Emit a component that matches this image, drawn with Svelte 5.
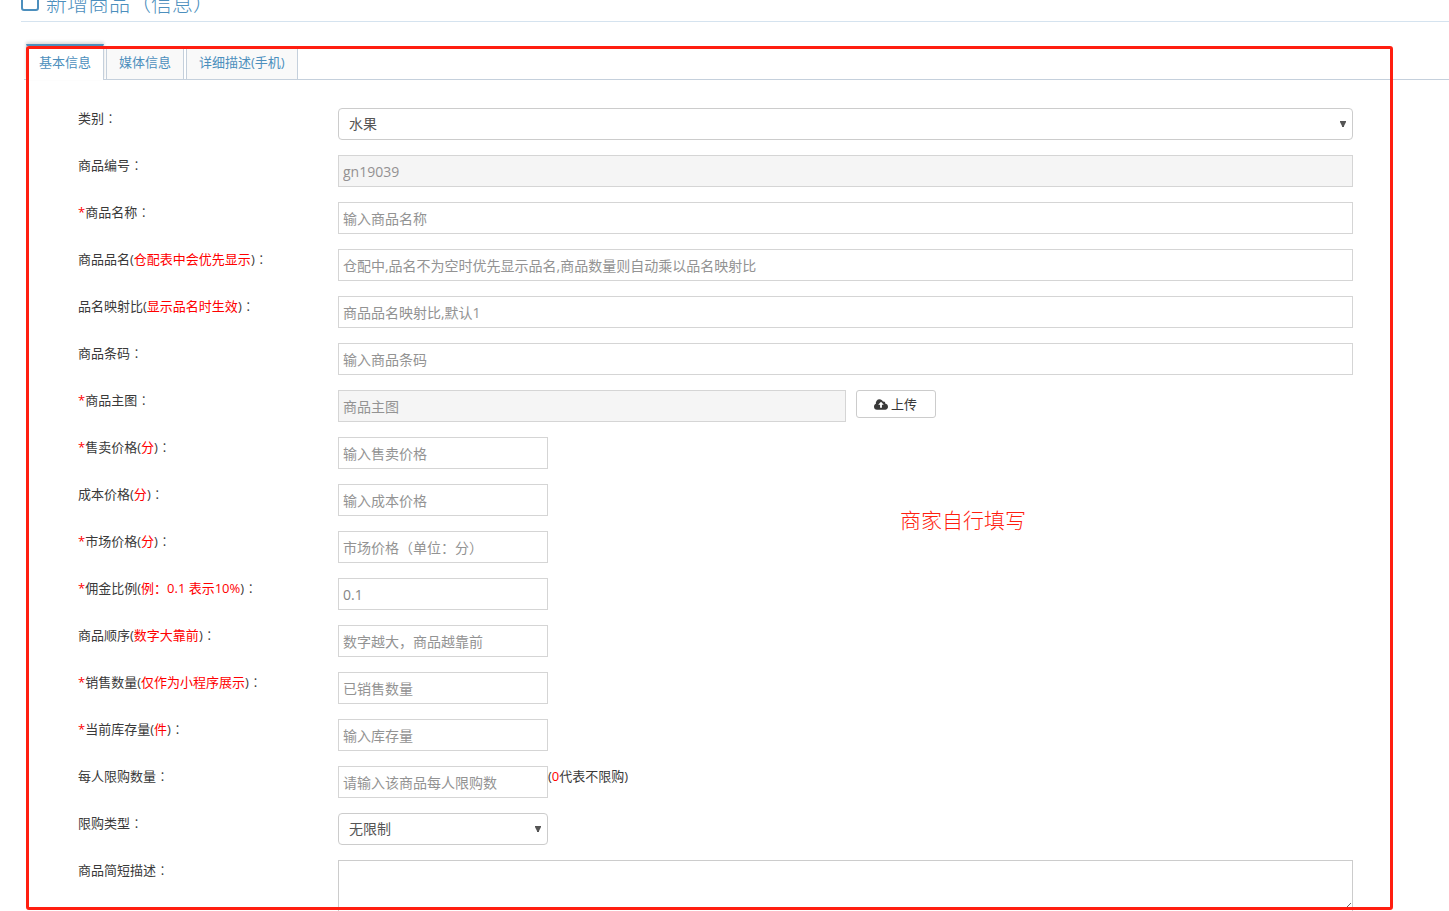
<script>
  let activeTab = $state(0);
  const tabs = ["基本信息", "媒体信息", "详细描述(手机)"];

  // note = red text inside the brackets
  const fields = [
    { id: "category", label: "类别", type: "select", options: ["水果", "蔬菜"], size: "full" },
    { id: "code", label: "商品编号", value: "gn19039", readonly: true, size: "full" },
    { id: "name", label: "商品名称", required: true, placeholder: "输入商品名称", size: "full" },
    { id: "alias", label: "商品品名", note: "仓配表中会优先显示", placeholder: "仓配中,品名不为空时优先显示品名,商品数量则自动乘以品名映射比", size: "full" },
    { id: "ratio", label: "品名映射比", note: "显示品名时生效", placeholder: "商品品名映射比,默认1", size: "full" },
    { id: "barcode", label: "商品条码", placeholder: "输入商品条码", size: "full" },
    { id: "image", label: "商品主图", required: true, placeholder: "商品主图", readonly: true, upload: true, size: "half" },
    { id: "price", label: "售卖价格", required: true, note: "分", placeholder: "输入售卖价格", size: "small" },
    { id: "cost", label: "成本价格", note: "分", placeholder: "输入成本价格", size: "small" },
    { id: "market", label: "市场价格", required: true, note: "分", placeholder: "市场价格（单位：分）", size: "small" },
    { id: "commission", label: "佣金比例", required: true, note: "例：0.1 表示10%", value: "0.1", size: "small" },
    { id: "order", label: "商品顺序", note: "数字大靠前", placeholder: "数字越大，商品越靠前", size: "small" },
    { id: "sold", label: "销售数量", required: true, note: "仅作为小程序展示", placeholder: "已销售数量", size: "small" },
    { id: "stock", label: "当前库存量", required: true, note: "件", placeholder: "输入库存量", size: "small" },
    { id: "limit", label: "每人限购数量", placeholder: "请输入该商品每人限购数", size: "small", hint: true },
    { id: "limitType", label: "限购类型", type: "select", options: ["无限制", "每日限购"], size: "small" },
    { id: "summary", label: "商品简短描述", type: "textarea", size: "full" },
  ];
</script>

<div class="page">
  <h1>
    <svg class="title-icon" viewBox="0 0 18 18" aria-hidden="true">
      <rect x="1" y="1" width="16" height="16" rx="2" fill="none" stroke="currentColor" stroke-width="2" />
    </svg>
    新增商品（信息）
  </h1>

  <div class="tabs" role="tablist">
    {#each tabs as tab, i}
      <button type="button" role="tab" aria-selected={activeTab === i} class:active={activeTab === i} onclick={() => (activeTab = i)}>{tab}</button>
    {/each}
  </div>

  <form onsubmit={(e) => e.preventDefault()}>
    {#each fields as field}
      <div class="row">
        <label for={field.id}>{#if field.required}<span class="red">*</span>{/if}{field.label}{#if field.note}(<span class="red">{field.note}</span>){/if}<span class="colon">：</span></label>
        <div class="control">
          {#if field.type === "select"}
            <div class="select {field.size}">
              <select id={field.id}>
                {#each field.options as option}
                  <option>{option}</option>
                {/each}
              </select>
              <svg class="arrow" viewBox="0 0 6 6" aria-hidden="true"><path d="M0 0h6v1L4 5v1H2V5L0 1z" fill="#555" /></svg>
            </div>
          {:else if field.type === "textarea"}
            <textarea id={field.id} class={field.size}></textarea>
          {:else}
            <input id={field.id} type="text" class={field.size} value={field.value ?? ""} placeholder={field.placeholder} readonly={field.readonly} />
          {/if}
          {#if field.upload}
            <button type="button" class="upload">
              <svg viewBox="0 0 15 11" aria-hidden="true">
                <path d="M3.4 11A3.3 3.3 0 0 1 0 7.8C0 6.400.8 5.300 2 4.800A4 4 0 0 1 5.900 0C7.600 0 9 1 9.700 2.500 10.900 1.800 12.300 2.800 12 4.400 13.700 4.700 15 6 15 7.800 15 9.600 13.700 11 12 11z" fill="#393939" />
                <path d="M7.500 2.500L4.500 5.700H6.500V9H8.500V5.700H10.500z" fill="#fff" />
              </svg>
              上传
            </button>
          {/if}
          {#if field.hint}
            <span class="hint">(<span class="red">0</span>代表不限购)</span>
          {/if}
        </div>
      </div>
    {/each}
  </form>

  <div class="frame">
    <span class="remark">商家自行填写</span>
  </div>
</div>

<style>
  :global(body) {
    margin: 0;
    background: #fff;
  }

  .page {
    position: relative;
    height: 100vh;
    overflow: hidden;
    font-family: "Open Sans", "Noto Sans CJK SC", sans-serif;
    font-size: 13px;
    line-height: 20px;
    color: #393939;
  }

  h1 {
    display: flex;
    align-items: center;
    height: 36px;
    margin: -15px 0 24px 21px;
    border-bottom: 1px solid #d5e3ef;
    font-size: 21px;
    font-weight: 300;
    line-height: 36px;
    color: #4c8fbd;
  }

  .title-icon {
    width: 18px;
    height: 18px;
    margin: -2px 7px 0 0;
  }

  .tabs {
    display: flex;
    align-items: flex-end;
    gap: 2px;
    height: 33px;
    margin-left: 24px;
    padding-left: 2px;
    border-bottom: 1px solid #c5d0dc;
  }

  .tabs button {
    height: 33px;
    padding: 0 12px 2px;
    border: 1px solid #c5d0dc;
    border-bottom: 0;
    background: #f9f9f9;
    font: inherit;
    color: #4c8fbd;
    cursor: pointer;
  }

  .tabs button.active {
    height: 36px;
    margin-bottom: -1px;
    padding-bottom: 3px;
    border-top: 2px solid #4c8fbd;
    background: #fff;
    box-shadow: 0 -2px 3px rgba(0, 0, 0, 0.15);
  }

  form {
    padding: 28px 96px 0 78px;
  }

  .row {
    display: grid;
    grid-template-columns: 260px 1fr;
    margin-bottom: 15px;
  }

  .red {
    color: #f00;
  }

  .colon {
    font-family: "Noto Sans CJK TC", sans-serif;
    font-weight: 300;
  }

  .control {
    display: flex;
    align-items: flex-start;
  }

  input,
  select,
  textarea {
    box-sizing: border-box;
    height: 32px;
    margin: 0;
    padding: 4px;
    border: 1px solid #d5d5d5;
    border-radius: 0;
    background: #fff;
    font: inherit;
    font-size: 14px;
    color: #858585;
  }

  input::placeholder {
    color: #939393;
    opacity: 1;
  }

  input[readonly] {
    background: #f5f5f5;
    color: #939192;
  }

  .full {
    width: 100%;
  }

  .half {
    width: 50%;
  }

  .small {
    width: 210px;
  }

  .select {
    position: relative;
  }

  select {
    width: 100%;
    padding: 0 24px 0 10px;
    border-color: #ccc;
    border-radius: 4px;
    appearance: none;
    color: #555;
  }

  .arrow {
    position: absolute;
    top: 13px;
    right: 7px;
    width: 6px;
    height: 6px;
    pointer-events: none;
  }

  textarea {
    height: 52px;
    border-color: #ccc;
    resize: vertical;
  }

  .upload {
    display: flex;
    align-items: center;
    justify-content: center;
    gap: 3px;
    width: 80px;
    height: 28px;
    margin-left: 10px;
    padding: 0;
    border: 1px solid #ccc;
    border-radius: 3px;
    background: #fff;
    font: inherit;
    color: #393939;
    cursor: pointer;
  }

  .upload svg {
    width: 14px;
    height: 11px;
  }

  .hint {
    white-space: nowrap;
  }

  /* annotation drawn over the form */
  .frame {
    position: absolute;
    inset: 46px 56px 1px 26px;
    border: 3px solid #ff1e10;
    border-radius: 3px;
    pointer-events: none;
  }

  .remark {
    position: absolute;
    top: 455px;
    left: 871px;
    font-size: 21px;
    font-weight: 300;
    line-height: 32px;
    color: #ff1e10;
  }
</style>
